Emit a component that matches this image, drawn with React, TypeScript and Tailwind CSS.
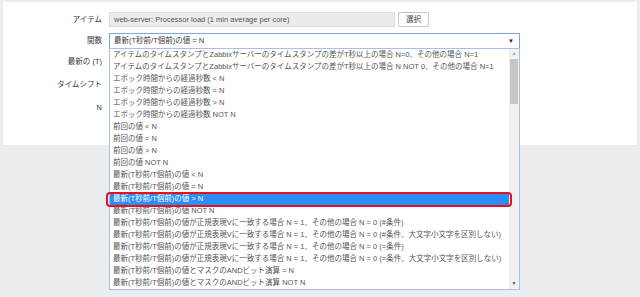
const options = [
  'アイテムのタイムスタンプとZabbixサーバーのタイムスタンプの差がT秒以上の場合 N=0、その他の場合 N=1',
  'アイテムのタイムスタンプとZabbixサーバーのタイムスタンプの差がT秒以上の場合 N NOT 0、その他の場合 N=1',
  'エポック時間からの経過秒数 < N',
  'エポック時間からの経過秒数 = N',
  'エポック時間からの経過秒数 > N',
  'エポック時間からの経過秒数 NOT N',
  '前回の値 < N',
  '前回の値 = N',
  '前回の値 > N',
  '前回の値 NOT N',
  '最新(T秒前/T個前)の値 < N',
  '最新(T秒前/T個前)の値 = N',
  '最新(T秒前/T個前)の値 > N',
  '最新(T秒前/T個前)の値 NOT N',
  '最新(T秒前/T個前)の値が正規表現Vに一致する場合 N = 1、その他の場合 N = 0 (#条件)',
  '最新(T秒前/T個前)の値が正規表現Vに一致する場合 N = 1、その他の場合 N = 0 (#条件、大文字小文字を区別しない)',
  '最新(T秒前/T個前)の値が正規表現Vに一致する場合 N = 1、その他の場合 N = 0 (=条件)',
  '最新(T秒前/T個前)の値が正規表現Vに一致する場合 N = 1、その他の場合 N = 0 (=条件、大文字小文字を区別しない)',
  '最新(T秒前/T個前)の値とマスクのANDビット演算 = N',
  '最新(T秒前/T個前)の値とマスクのANDビット演算 NOT N',
];

const SELECTED = 12;

export default function App() {
  return (
    <div
      className="w-[640px] h-[297px] bg-[#ebeef0] pt-[2px] pl-[3px] pr-[3px] text-[7.5px] text-[#3a3a3a] overflow-hidden"
      style={{ fontFamily: '"Liberation Sans", "Noto Sans CJK JP", sans-serif' }}
    >
      <div className="bg-white h-[143px] pt-[10px] flex flex-col">
        {/* Item */}
        <div className="flex items-center h-[15px]">
          <div className="w-[99px] text-right">アイテム</div>
          <div className="ml-[7px] w-[286px] h-full bg-[#ececec] border border-[#dcdcdc] flex items-center px-[4px] text-[#555]">
            web-server: Processor load (1 min average per core)
          </div>
          <div className="ml-[3px] w-[31px] h-full border border-[#c8c8c8] rounded-[2px] bg-white flex items-center justify-center text-[#444]">
            選択
          </div>
        </div>

        {/* Function */}
        <div className="flex items-center h-[16px] mt-[6px]">
          <div className="w-[99px] text-right">関数</div>
          <div className="ml-[7px] relative w-[411px] h-full">
            <div className="h-full border border-[#7ea6d9] bg-white flex items-center justify-between pl-[4px] pr-[5px]">
              <span>最新(T秒前/T個前)の値 = N</span>
              <span className="text-[6px] text-[#222]">▼</span>
            </div>

            {/* Dropdown list */}
            <div className="absolute left-0 top-[15px] w-[411px] h-[242px] border border-[#a9c0e4] bg-white flex z-10">
              <div className="flex-1 flex flex-col overflow-hidden">
                {options.map((opt, i) => (
                  <div
                    key={i}
                    className={
                      i === SELECTED
                        ? 'h-[12px] shrink-0 flex items-center pl-[3px] bg-[#2b8ef6] text-white whitespace-nowrap'
                        : 'h-[12px] shrink-0 flex items-center pl-[3px] text-[#555] whitespace-nowrap'
                    }
                  >
                    {opt}
                  </div>
                ))}
              </div>
              {/* Scrollbar */}
              <div className="w-[10px] bg-[#f1f1f1] flex flex-col items-center">
                <div className="h-[10px] flex items-center justify-center text-[5px] text-[#a3a3a3]">▲</div>
                <div className="w-[8px] h-[45px] bg-[#c6c6c6]" />
                <div className="flex-1" />
                <div className="h-[10px] flex items-center justify-center text-[5px] text-[#505050]">▼</div>
              </div>
              {/* Annotation */}
              <div className="absolute left-[-4px] right-[7px] top-[143px] h-[15px] border-2 border-[#e8101a] rounded-[4px]" />
            </div>
          </div>
        </div>

        <div className="flex items-center h-[16px] mt-[5px]">
          <div className="w-[99px] text-right">最新の (T)</div>
        </div>
        <div className="flex items-center h-[16px] mt-[7px]">
          <div className="w-[99px] text-right">タイムシフト</div>
        </div>
        <div className="flex items-center h-[16px] mt-[7px]">
          <div className="w-[99px] text-right">N</div>
        </div>
      </div>
    </div>
  );
}
